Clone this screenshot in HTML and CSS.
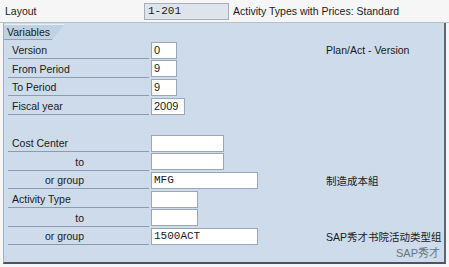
FILE: index.html
```
<!DOCTYPE html>
<html lang="en">
<head>
    <meta charset="UTF-8">
    <title>Activity Types with Prices</title>
    <link rel="stylesheet" href="styles.css">
</head>
<body>
    <div class="screen">
        <div class="topbar">
            <span class="top-label">Layout</span>
            <span class="field layout-field mono">1-201</span>
            <span class="top-text">Activity Types with Prices: Standard</span>
        </div>
        <div class="panel">
            <div class="tab">Variables</div>
            <div class="rows">
                <div class="row">
                    <span class="label">Version</span>
                    <span class="field w26">0</span>
                    <span class="desc">Plan/Act - Version</span>
                </div>
                <div class="row">
                    <span class="label">From Period</span>
                    <span class="field w26">9</span>
                </div>
                <div class="row">
                    <span class="label">To Period</span>
                    <span class="field w26">9</span>
                </div>
                <div class="row">
                    <span class="label">Fiscal year</span>
                    <span class="field w33">2009</span>
                </div>
                <div class="row"></div>
                <div class="row">
                    <span class="label">Cost Center</span>
                    <span class="field w72"></span>
                </div>
                <div class="row">
                    <span class="label sub">to</span>
                    <span class="field w72"></span>
                </div>
                <div class="row">
                    <span class="label sub">or group</span>
                    <span class="field w106 mono">MFG</span>
                    <span class="desc">制造成本組</span>
                </div>
                <div class="row">
                    <span class="label">Activity Type</span>
                    <span class="field w46"></span>
                </div>
                <div class="row">
                    <span class="label sub">to</span>
                    <span class="field w46"></span>
                </div>
                <div class="row">
                    <span class="label sub">or group</span>
                    <span class="field w106 mono">1500ACT</span>
                    <span class="desc">SAP秀才书院活动类型组</span>
                </div>
            </div>
            <div class="mark">SAP秀才</div>
        </div>
    </div>
</body>
</html>
```
FILE: styles.css
```
body {
    margin: 0;
    font-family: "Liberation Sans", Arial, "Noto Sans CJK SC", sans-serif;
    font-size: 10.5px;
    color: #1a1a1a;
    background-color: #ffffff;
}
.screen {
    width: 449px;
    height: 267px;
    display: flex;
    flex-direction: column;
    background-color: #f6f6f6;
}
.topbar {
    height: 23px;
    display: flex;
    align-items: center;
    box-sizing: border-box;
    padding-left: 5px;
    border-bottom: 1px solid #b8c2cc;
}
.top-label {
    width: 139px;
}
.field {
    box-sizing: border-box;
    height: 17px;
    line-height: 15px;
    padding-left: 2px;
    background-color: #ffffff;
    border: 1px solid #9aa8b6;
    font-size: 11px;
}
.layout-field {
    width: 85px;
    background-color: #dde4ec;
    border-color: #a4b0bc;
    padding-left: 3px;
}
.top-text {
    margin-left: 4px;
}
.mono {
    font-family: "Liberation Mono", "Courier New", monospace;
    font-size: 11px;
}
.panel {
    position: relative;
    margin: 0 3px 3px 3px;
    flex: 1;
    background-color: #cddbea;
    border-right: 2px solid #5c6670;
    border-bottom: 2px solid #4c545c;
    border-left: 1px solid #9fb0c2;
}
.tab {
    width: 58px;
    height: 14px;
    line-height: 14px;
    padding-left: 3px;
    margin-top: 1px;
    background-color: #c0d1e3;
    border-top: 1px solid #e6eef6;
    border-bottom: 1px solid #8ea2b8;
    clip-path: polygon(0 0, 100% 0, 78% 100%, 0 100%);
}
.rows {
    display: flex;
    flex-direction: column;
    padding-top: 1px;
}
.row {
    height: 18.6px;
    display: flex;
    align-items: center;
}
.label {
    box-sizing: border-box;
    width: 141px;
    height: 18px;
    line-height: 19px;
    margin-left: 4px;
    padding-left: 4px;
    margin-right: 2px;
    border-bottom: 1px solid #8c9cae;
}
.sub {
    text-align: right;
    padding-left: 0;
    padding-right: 65px;
}
.w26 { width: 26px; }
.w33 { width: 34px; }
.w46 { width: 47px; }
.w72 { width: 73px; }
.w106 { width: 107px; }
.desc {
    position: absolute;
    left: 322px;
}
.mark {
    position: absolute;
    right: 4px;
    bottom: 2px;
    font-size: 11px;
    color: #6a7480;
}
```
